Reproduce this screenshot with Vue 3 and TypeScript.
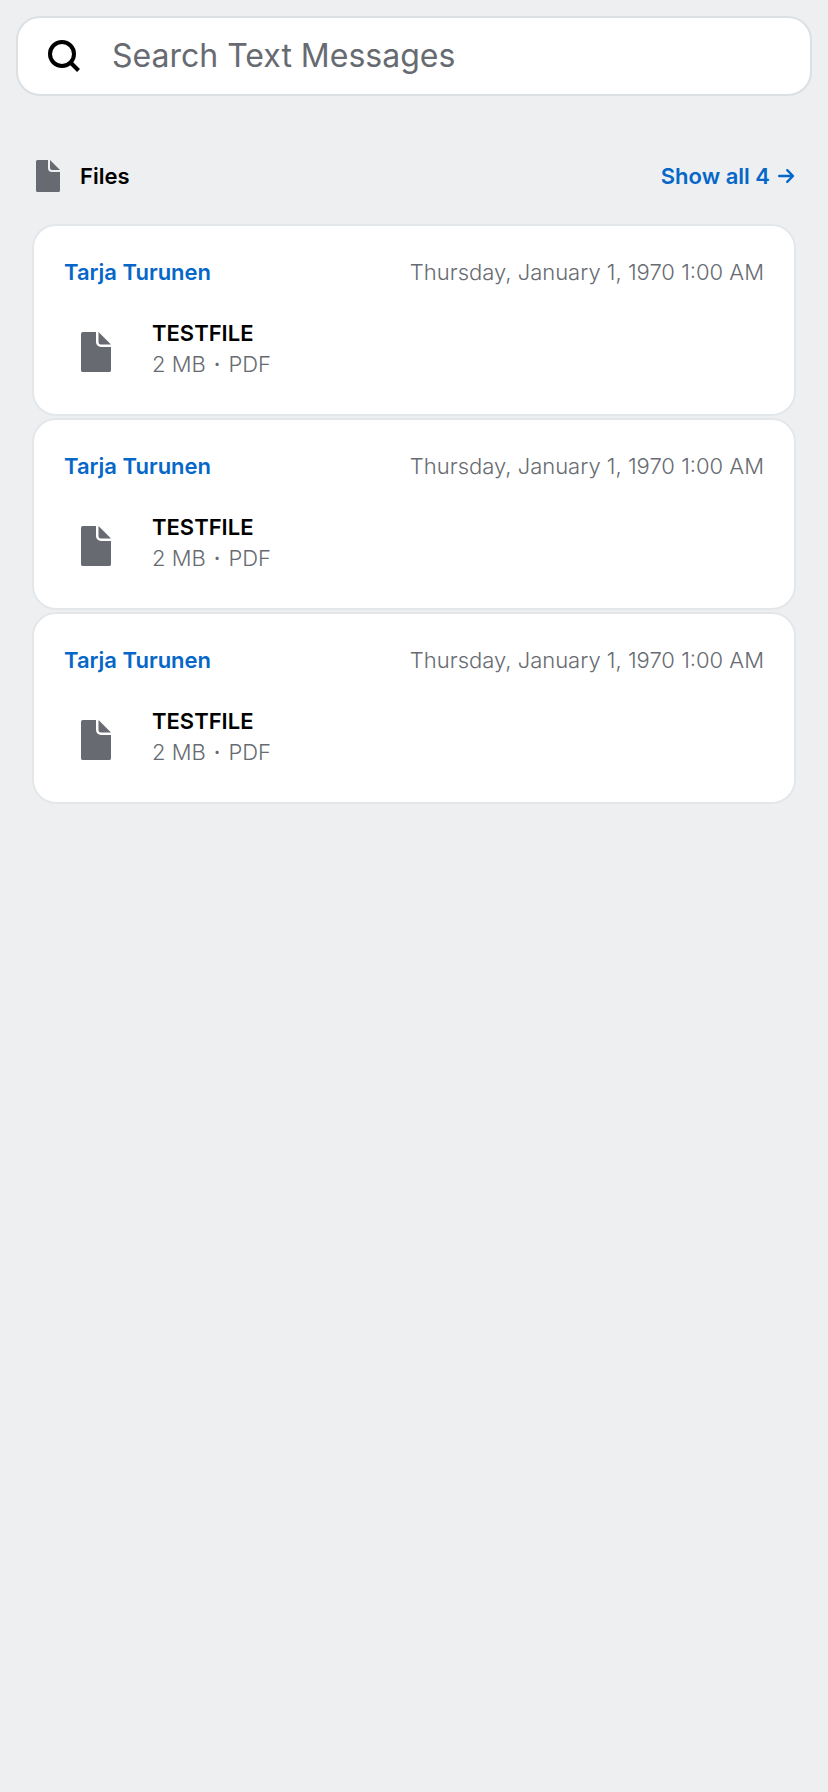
<script setup lang="ts">
import { ref } from 'vue'

interface FileMessage {
  id: number
  sender: string
  date: string
  name: string
  size: string
  kind: string
}

const query = ref('')
const total = 4
const files: FileMessage[] = [1, 2, 3].map((id) => ({
  id,
  sender: 'Tarja Turunen',
  date: 'Thursday, January 1, 1970 1:00 AM',
  name: 'TESTFILE',
  size: '2 MB',
  kind: 'PDF',
}))
</script>

<template>
  <main class="page">
    <label class="search">
      <svg class="search-icon" viewBox="0 0 32 32" aria-hidden="true">
        <circle cx="14" cy="14" r="12" />
        <path d="M22.5 22.5 30.5 30.5" />
      </svg>
      <input
        v-model="query"
        class="search-input"
        type="text"
        placeholder="Search Text Messages"
        aria-label="Search Text Messages"
      />
    </label>

    <section class="results">
      <header class="section-head">
        <svg class="file-icon" viewBox="0 0 24 32" aria-hidden="true">
          <path d="M1.5 0H12V8a4 4 0 0 0 4 4H24V30.5a1.5 1.5 0 0 1-1.5 1.5H1.5A1.5 1.5 0 0 1 0 30.5V1.5A1.5 1.5 0 0 1 1.5 0Z" />
          <path d="M14 0 24 10H16a2 2 0 0 1-2-2Z" />
        </svg>
        <h2 class="section-title">Files</h2>
        <button class="show-all" type="button">
          <span>Show all {{ total }}</span>
          <svg class="arrow" viewBox="0 0 18 16" aria-hidden="true">
            <path d="M1.2 8H14.6M9.2 2.2l5.8 5.8-5.8 5.8" />
          </svg>
        </button>
      </header>

      <ul class="cards">
        <li v-for="file in files" :key="file.id" class="card">
          <div class="card-head">
            <span class="sender">{{ file.sender }}</span>
            <time class="date">{{ file.date }}</time>
          </div>
          <div class="file">
            <svg class="file-icon large" viewBox="0 0 24 32" aria-hidden="true">
              <path d="M1.5 0H12V8a4 4 0 0 0 4 4H24V30.5a1.5 1.5 0 0 1-1.5 1.5H1.5A1.5 1.5 0 0 1 0 30.5V1.5A1.5 1.5 0 0 1 1.5 0Z" />
              <path d="M14 0 24 10H16a2 2 0 0 1-2-2Z" />
            </svg>
            <div class="file-text">
              <span class="file-name">{{ file.name }}</span>
              <span class="file-meta">
                <span>{{ file.size }}</span>
                <span class="dot">·</span>
                <span>{{ file.kind }}</span>
              </span>
            </div>
          </div>
        </li>
      </ul>
    </section>
  </main>
</template>

<style>
body {
  margin: 0;
  background: #edeff0;
}
</style>

<style scoped>
.page {
  box-sizing: border-box;
  min-height: 100vh;
  padding: 16px;
  background: #edeff0;
  color: #000;
  font-family: Inter, "Liberation Sans", sans-serif;
  font-size: 22px;
  line-height: 32px;
}

.search {
  display: flex;
  align-items: center;
  gap: 32px;
  box-sizing: border-box;
  height: 80px;
  padding: 0 30px;
  border: 2px solid #dce0e3;
  border-radius: 24px;
  background: #fff;
}

.search-icon {
  flex: none;
  width: 32px;
  height: 32px;
  fill: none;
  stroke: #000;
  stroke-width: 4;
}

.search-input {
  flex: 1;
  min-width: 0;
  padding: 0;
  border: 0;
  outline: 0;
  background: transparent;
  color: #000;
  font: inherit;
  font-size: 32px;
  line-height: 44px;
}

.search-input::placeholder {
  color: #676b71;
  opacity: 1;
}

.results {
  padding: 64px 16px 0;
}

.section-head {
  display: flex;
  align-items: center;
  padding: 0 0 32px 4px;
}

.section-title {
  flex: 1;
  margin: 0 0 0 20px;
  font-size: 22px;
  font-weight: 600;
  line-height: 32px;
}

.show-all {
  display: flex;
  align-items: center;
  gap: 8px;
  padding: 0;
  border: 0;
  background: none;
  color: #0667c8;
  font: inherit;
  font-weight: 600;
  cursor: pointer;
}

.arrow {
  width: 18px;
  height: 16px;
  fill: none;
  stroke: currentColor;
  stroke-width: 2.4;
  stroke-linecap: round;
  stroke-linejoin: round;
}

.file-icon {
  flex: none;
  width: 24px;
  height: 32px;
  fill: #676b71;
}

.file-icon.large {
  width: 30px;
  height: 40px;
  margin-top: 6px;
}

.cards {
  display: grid;
  gap: 2px;
  margin: 0;
  padding: 0;
  list-style: none;
}

.card {
  padding: 30px 30px 34px;
  border: 2px solid #e4e7ea;
  border-radius: 24px;
  background: #fff;
}

.card-head {
  display: flex;
  justify-content: space-between;
  gap: 16px;
}

.sender {
  color: #0667c8;
  font-weight: 600;
}

.date,
.file-meta {
  color: #676b71;
  font-weight: 300;
}

.file {
  display: flex;
  align-items: center;
  gap: 41px;
  margin-top: 30px;
  padding-left: 17px;
}

.file-text {
  display: flex;
  flex-direction: column;
  line-height: 31px;
}

.file-name {
  font-weight: 600;
}

.file-meta {
  display: flex;
  gap: 8px;
}

.dot {
  font-weight: 500;
}
</style>
